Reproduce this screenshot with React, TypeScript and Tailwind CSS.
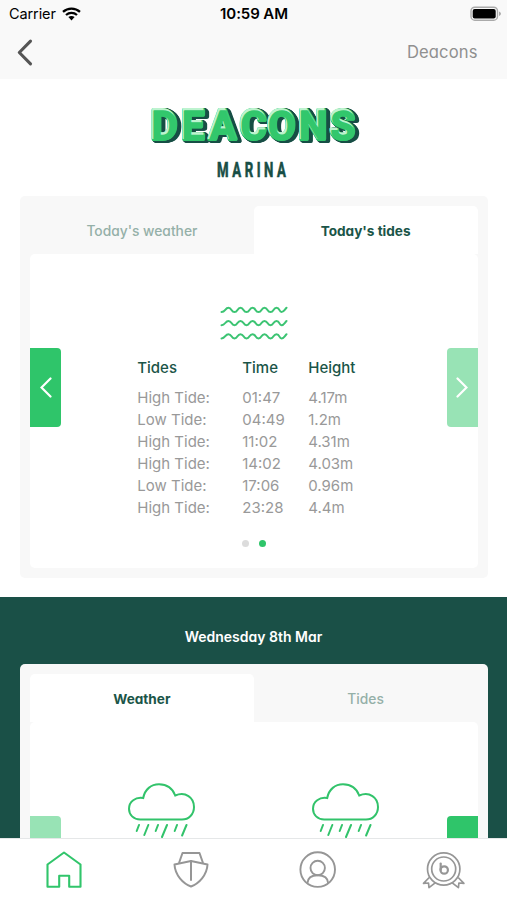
import type { ReactNode } from "react";

const tides = [
  { kind: "High Tide:", time: "01:47", height: "4.17m" },
  { kind: "Low Tide:", time: "04:49", height: "1.2m" },
  { kind: "High Tide:", time: "11:02", height: "4.31m" },
  { kind: "High Tide:", time: "14:02", height: "4.03m" },
  { kind: "Low Tide:", time: "17:06", height: "0.96m" },
  { kind: "High Tide:", time: "23:28", height: "4.4m" },
];

function StatusBar() {
  return (
    <div className="grid h-7 grid-cols-3 items-center pl-[9px] pr-[5px] text-black">
      <div className="flex items-center gap-[6px]">
        <span className="text-[14.5px] tracking-[-0.1px]">Carrier</span>
        <svg width="19" height="14" viewBox="0 0 19 14" fill="none" stroke="#000" strokeWidth="2.3">
          <path d="M1 4.9C5.7.6 13.3.6 18 4.9" />
          <path d="M4 8c3.2-2.8 7.8-2.8 11 0" />
          <path d="M6.4 10.1c1.8-1.5 4.4-1.5 6.2 0L9.5 13.4Z" fill="#000" stroke="none" />
        </svg>
      </div>
      <div className="pr-[3px] text-center text-[15px] font-semibold tracking-[-0.1px]">10:59 AM</div>
      <svg className="justify-self-end" width="32" height="16" viewBox="0 0 32 16">
        <rect x="1" y="1.2" width="26.5" height="13" rx="3.8" fill="#f9f9f9" stroke="#aaa" strokeWidth="1.4" />
        <rect x="2.7" y="3" width="23" height="9.5" rx="2" fill="#000" />
        <path d="M29 5.5c2.6.9 2.6 3.5 0 4.4Z" fill="#aaa" />
      </svg>
    </div>
  );
}

function Logo() {
  const letters = {
    x: "11 41.5 69 100 127.5 158.5 190",
    y: 43,
    fontSize: 40,
    fontWeight: 700,
    strokeLinejoin: "round" as const,
  };
  return (
    <svg className="mx-auto block font-[Roboto,sans-serif]" width="227" height="86" viewBox="0 0 227 86">
      <text
        {...letters}
        fill="#2fc66a"
        stroke="#2fc66a"
        strokeWidth="4"
        className="[filter:drop-shadow(1px_1px_0_#174e45)_drop-shadow(1px_1px_0_#174e45)_drop-shadow(1px_0.7px_0_#174e45)_drop-shadow(1px_0.5px_0_#174e45)]"
      >
        DEACONS
      </text>
      <text {...letters} fill="#bdf3cf" stroke="#bdf3cf" strokeWidth="2" transform="translate(-.7 -.8)">
        DEACONS
      </text>
      <text {...letters} fill="#32c76c" stroke="#32c76c" strokeWidth="1.4" transform="translate(.5 .5)">
        DEACONS
      </text>
      <text
        transform="translate(77 81) scale(.66 1)"
        letterSpacing="5.4"
        fontSize="20"
        fontWeight="700"
        fill="#174e45"
        stroke="#174e45"
        strokeWidth=".6"
      >
        MARINA
      </text>
    </svg>
  );
}

function Arrow({ side, faded }: { side: "left" | "right"; faded: boolean }) {
  const shape = side === "left" ? "rounded-r-[4px]" : "rounded-l-[4px]";
  const color = faded ? "bg-[#98e3b5]" : "bg-[#2fc56a]";
  return (
    <button className={`flex h-[79px] w-[31px] items-center justify-center ${shape} ${color}`}>
      <svg width="12" height="21" viewBox="0 0 12 21" fill="none" stroke="#fff" strokeWidth="2.2" strokeLinecap="round">
        <path d={side === "left" ? "M10.5 1.5 1.5 10.5l9 9" : "M1.5 1.5l9 9-9 9"} />
      </svg>
    </button>
  );
}

function Card({ tabs, active, fadedSide, children }: { tabs: string[]; active: number; fadedSide: string; children: ReactNode }) {
  return (
    <section className="mx-5 h-[382px] w-[467.5px] rounded-[5px] bg-[#f8f8f8] p-[10px]">
      <div className="grid h-12 grid-cols-2">
        {tabs.map((tab, i) => (
          <button
            key={tab}
            className={
              i === active
                ? "rounded-t-[5px] bg-white pt-[2px] text-[13.6px] font-bold text-[#1b5548]"
                : "pt-[2px] text-[13.8px] font-medium text-[#95b0a8]"
            }
          >
            {tab}
          </button>
        ))}
      </div>
      <div className="flex h-[314px] items-start justify-between rounded-[5px] bg-white">
        <div className="pt-[93.5px]"><Arrow side="left" faded={fadedSide === "left"} /></div>
        {children}
        <div className="pt-[93.5px]"><Arrow side="right" faded={fadedSide === "right"} /></div>
      </div>
    </section>
  );
}

function Waves() {
  return (
    <svg className="mx-auto block" width="68" height="34" viewBox="0 0 68 34" fill="none" stroke="#3cc473" strokeWidth="2" strokeLinecap="round">
      {[4, 17.2, 30.4].map((y) => (
        <path key={y} transform={`translate(1.5 ${y})`} d="M0 2C4 2 3.5-2.2 7-2.2S9.5 2 13 2s2.5-4.2 6-4.2S21.5 2 25 2s2.500-4.2 6-4.2S33.5 2 37 2s2.5-4.2 6-4.2S45.5 2 49 2s2.5-4.2 6-4.2S57.5 2 60 2c2.5 0 3-2.2 5-4.2" />
      ))}
    </svg>
  );
}

function Rain() {
  return (
    <svg width="68" height="56" viewBox="0 0 68 56" fill="none" stroke="#32c36b" strokeWidth="2" strokeLinecap="round">
      <path d="M12.2 36.5C5.5 36.5 1 31.8 1 25.8 1 18.5 7.5 13.8 15.2 15.1 16.8 6.2 23.2 1.3 31 1.3c7.7 0 13.6 4.2 16.2 11.2C57.5 8.2 66 14.5 66 24c0 7.2-5.2 12.5-12 12.5Z" />
      <path d="m11 42-2.3 6M20.3 42l-4 10M30 42l-2.3 6M39 42l-5 12M49 42l-2.3 6M58.5 42l-4.4 10.5" />
    </svg>
  );
}

function TabBar() {
  return (
    <nav className="flex h-[62px] shrink-0 items-start border-t border-[#e5e7e8] bg-white">
      <div className="flex flex-1 justify-center pl-px pt-[12px]">
        <svg width="36" height="38" viewBox="0 0 36 38" fill="none" stroke="#31c56b" strokeWidth="2.1" strokeLinejoin="round">
          <path d="M1.5 13.5 18 1.5l16.5 12v22.2H23.2V24.8h-10v10.9H1.5Z" />
        </svg>
      </div>
      <div className="flex flex-1 justify-center pl-px pt-[12px]">
        <svg width="36" height="38" viewBox="0 0 36 38" fill="none" stroke="#969696" strokeWidth="2" strokeLinejoin="round">
          <path d="M6 12 9.5 2h17L30 12" />
          <path d="M18 10 34.5 13.5C34 24 26 32.5 18 35.5 10 32.5 2 24 1.5 13.5Z" />
          <path d="M18 10v19" strokeLinecap="round" />
        </svg>
      </div>
      <div className="flex flex-1 justify-center pt-[12px]">
        <svg width="38" height="38" viewBox="0 0 38 38" fill="none" stroke="#969696" strokeWidth="1.9">
          <circle cx="18.7" cy="18.6" r="17.3" />
          <circle cx="18.7" cy="17" r="7.2" />
          <path d="M8.4 32.3C8.7 26.8 12.9 24.3 18.700 24.3S28.9 26.8 29.2 32.3" />
        </svg>
      </div>
      <div className="flex flex-1 justify-center pt-[12px]">
        <svg width="44" height="40" viewBox="0 0 44 40" fill="none" stroke="#969696" strokeWidth="1.7" strokeLinejoin="round">
          <circle cx="21.7" cy="18" r="16.2" />
          <circle cx="21.7" cy="18" r="12" />
          <path d="M7.2 26.5 1.500 32.3l5-.3.5 4.700 6.500-5M36.2 26.5l5.700 5.800-5-.3-.5 4.700-6.500-5" />
          <path d="M18.7 12.5v6.500" strokeWidth="2.2" strokeLinecap="round" />
          <circle cx="22.2" cy="19" r="3.7" strokeWidth="2.2" />
        </svg>
      </div>
    </nav>
  );
}

export default function App() {
  return (
    <div className="flex h-[900px] w-[507px] flex-col overflow-hidden bg-white font-['Inter',sans-serif]">
      <header className="h-[79px] shrink-0 bg-[#f9f9f9]">
        <StatusBar />
        <div className="flex h-12 items-center justify-between pl-[17px] pr-[29.5px]">
          <svg width="17" height="27" viewBox="0 0 17 27" fill="none" stroke="#555" strokeWidth="3.1" strokeLinecap="round" strokeLinejoin="round">
            <path d="M13.5 2.2 2.3 13.5l11.2 11.3" />
          </svg>
          <span className="text-[16.6px] tracking-[0.1px] text-[#909090] [font-feature-settings:'cv11']">Deacons</span>
        </div>
      </header>
      <main className="h-[759px] shrink-0 overflow-hidden [font-feature-settings:'cv11']">
        <div className="h-[117px] pt-[17px]">
          <Logo />
        </div>
        <Card tabs={["Today's weather", "Today's tides"]} active={1} fadedSide="right">
          <div className="flex flex-col items-center pt-[52px]">
            <Waves />
            <table className="mt-[17px] text-left text-[15px] text-[#999]">
              <thead>
                <tr className="h-[30px] align-top text-[#1b5548]">
                  <th className="w-[105px] p-0 font-medium">Tides</th>
                  <th className="w-[66px] p-0 font-medium">Time</th>
                  <th className="w-[62px] p-0 font-medium">Height</th>
                </tr>
              </thead>
              <tbody>
                {tides.map((tide) => (
                  <tr key={tide.time} className="h-[22px] leading-[22px]">
                    <td className="p-0">{tide.kind}</td>
                    <td className="p-0">{tide.time}</td>
                    <td className="p-0">{tide.height}</td>
                  </tr>
                ))}
              </tbody>
            </table>
            <div className="mt-[21px] flex gap-[10px]">
              <span className="size-[7px] rounded-full bg-[#dcdcdc]" />
              <span className="size-[7px] rounded-full bg-[#2fc56a]" />
            </div>
          </div>
        </Card>
        <div className="mt-[19px] h-[260px] bg-[#1a5047]">
          <h2 className="flex h-[67px] items-center justify-center pt-[11px] text-[14px] font-semibold text-white">
            Wednesday 8th Mar
          </h2>
          <Card tabs={["Weather", "Tides"]} active={0} fadedSide="left">
            <div className="flex flex-1 justify-center gap-[116px] pl-px pt-[61px]">
              <Rain />
              <Rain />
            </div>
          </Card>
        </div>
      </main>
      <TabBar />
    </div>
  );
}
